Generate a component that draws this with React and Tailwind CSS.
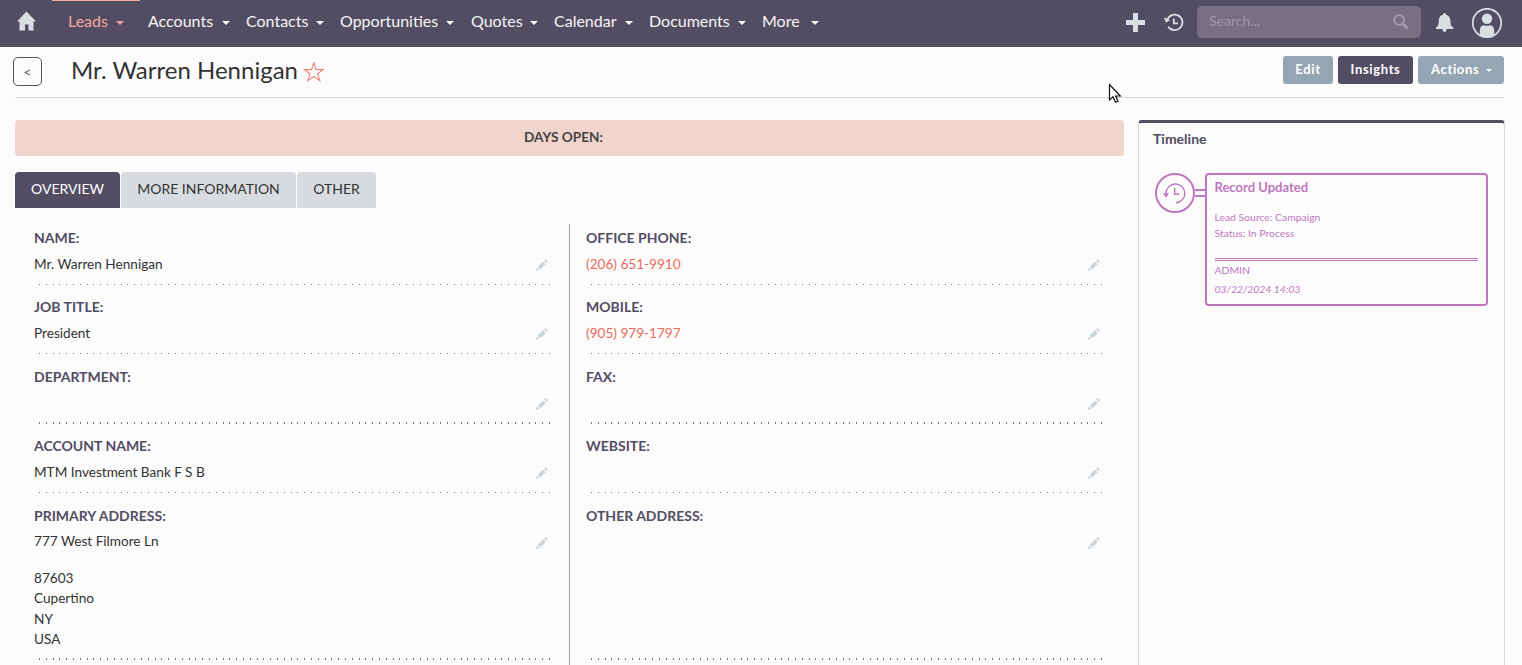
import React from "react";

const navItems = [
  { label: "Leads", box: "w-[80px] pr-[24px]", active: true },
  { label: "Accounts", box: "w-[98px] pr-[16px]" },
  { label: "Contacts", box: "w-[94px] pr-[16px]" },
  { label: "Opportunities", box: "w-[131px] pr-[17px]" },
  { label: "Quotes", box: "w-[83px] pr-[16px]" },
  { label: "Calendar", box: "w-[95px] pr-[16px]" },
  { label: "Documents", box: "w-[113px] pr-[16px]" },
  { label: "More", box: "w-[57px]" },
];

const rows = [
  { h: "h-[69px] pb-[8px]", left: { label: "NAME:", value: "Mr. Warren Hennigan" }, right: { label: "OFFICE PHONE:", value: "(206) 651-9910", link: true } },
  { h: "h-[70px] pb-[9px]", left: { label: "JOB TITLE:", value: "President" }, right: { label: "MOBILE:", value: "(905) 979-1797", link: true } },
  { h: "h-[69px] pb-[8px]", thick: true, left: { label: "DEPARTMENT:" }, right: { label: "FAX:" } },
  { h: "h-[70px] pb-[9px]", left: { label: "ACCOUNT NAME:", value: "MTM Investment Bank F S B" }, right: { label: "WEBSITE:" } },
  {
    h: "h-[166px] pb-[8px]",
    thick: true,
    left: { label: "PRIMARY ADDRESS:", value: "777 West Filmore Ln", extra: ["87603", "Cupertino", "NY", "USA"] },
    right: { label: "OTHER ADDRESS:" },
  },
];

function Caret({ className = "" }) {
  return (
    <svg className={className} width="8" height="4" viewBox="0 0 8 4" fill="currentColor">
      <path d="M0 0H8L4 4Z" />
    </svg>
  );
}

function Pencil() {
  return (
    <svg width="12" height="12" viewBox="0 0 12 12" fill="#c8d2d9">
      <path d="M0 12L1.2 8.3L3.7 10.8Z" />
      <path d="M2 7.6L7.2 2.4L9.8 5L4.6 10.2Z" />
      <path d="M8.1 1.6L9.2 .5Q9.7 0 10.2 .5L11.5 1.8Q12 2.3 11.5 2.8L10.4 3.9Z" />
    </svg>
  );
}

function Field({ field, thick }) {
  return (
    <div className="flex h-full flex-col">
      <div className="h-[28px] pt-[4px] text-[14px] leading-[20px] font-bold text-[#534d64]">{field.label}</div>
      <div className="flex justify-between text-[13.6px] leading-[20px]">
        <span className={(field.extra ? "pt-[1px] " : "pt-[2px] ") + (field.link ? "text-[#ee6a5b]" : "text-[#333]")}>
          {field.value || "\u00a0"}
        </span>
        <span className="h-[27px] pt-[7px]">
          <Pencil />
        </span>
      </div>
      {field.extra && (
        <div className="pt-[11px] text-[13.6px] leading-[20.4px] text-[#333]">
          {field.extra.map((line) => (
            <div key={line}>{line}</div>
          ))}
        </div>
      )}
      <div className="min-h-0 flex-1" />
      <div
        className={
          "ml-[5px] w-[512px] shrink-0 bg-[repeating-linear-gradient(90deg,#777_0_1px,transparent_1px_6.8px)] " +
          (thick ? "h-[2px]" : "h-px")
        }
      />
    </div>
  );
}

function HistoryIcon() {
  return (
    <svg width="20" height="19" viewBox="0 0 20 19" fill="none" stroke="#d8dee2">
      <path d="M3.2 7A7.8 7.8 0 1 1 4.2 13.8" strokeWidth="1.8" />
      <path d="M0 5.2L.9 4.4L2.6 5.8L6.2 6.9L2.1 9.8Z" fill="#d8dee2" stroke="none" />
      <path d="M9.8 5.5V10.3H14" strokeWidth="1.8" />
    </svg>
  );
}

export default function App() {
  return (
    <div className="relative flex h-[665px] w-[1522px] flex-col overflow-hidden bg-[#fcfcfc] font-['Lato',sans-serif]">
      <header className="flex h-[47px] shrink-0 bg-[#534d64]">
        <div className="w-[52px] pt-[11px] pl-[17px]">
          <svg width="20" height="20" viewBox="0 0 20 20" fill="#d8dee2">
            <path d="M9.5 .5L19 10.5H16.5V19.5H11.5V13.5H8V19.5H2.5V10.5H0Z" />
          </svg>
        </div>
        <nav className="flex">
          {navItems.map((item) => (
            <div
              key={item.label}
              className={item.active ? "flex border-t border-[#f5a69c] pl-[16px] text-[#f5a69c] w-[88px] mr-[8px]" : "flex border-t border-transparent text-[#f5f5f5]"}
            >
              <div className={"flex shrink-0 justify-between text-[16px] leading-[40px] " + item.box}>
                <span>{item.label}</span>
                <Caret className="mt-[20px] shrink-0" />
              </div>
            </div>
          ))}
        </nav>
        <div className="flex flex-1 justify-end pr-[20px]">
          <svg className="mt-[13px] mr-[19px]" width="19" height="19" viewBox="0 0 19 19" fill="#d8dee2">
            <path d="M7 0H12V7H19V12H12V19H7V12H0V7H7Z" />
          </svg>
          <div className="mt-[13px] mr-[13px]">
            <HistoryIcon />
          </div>
          <div className="mt-[6px] mr-[15px] flex h-[32px] w-[224px] justify-between rounded-[5px] bg-[#777083] pr-[12px] pl-[12px]">
            <span className="text-[14px] leading-[30px] text-[#9c97a3]">Search...</span>
            <svg className="mt-[8px]" width="16" height="16" viewBox="0 0 16 16" fill="none" stroke="#a19da8">
              <circle cx="6" cy="6" r="4.9" strokeWidth="1.9" />
              <path d="M10 10L14.6 14.6" strokeWidth="2.8" />
            </svg>
          </div>
          <svg className="mt-[13px] mr-[18px]" width="18" height="19" viewBox="0 0 18 19" fill="#d8dee2">
            <path d="M8.5 0C9.5 0 10 .8 10 1.8C13 2.5 14.4 5 14.4 8C14.4 11.5 15 13.3 17.5 14.8V16H-.3V14.8C2.2 13.3 2.8 11.5 2.8 8C2.8 5 4 2.5 7 1.8C7 .8 7.5 0 8.5 0Z" />
            <path d="M6.5 16H10.5Q10.5 19 8.5 19Q6.5 19 6.5 16Z" />
          </svg>
          <svg className="mt-[8px]" width="30" height="30" viewBox="0 0 30 30" fill="#d8dee2">
            <circle cx="15" cy="15" r="14.2" fill="none" stroke="#d8dee2" strokeWidth="1.7" />
            <circle cx="15" cy="10.7" r="5.2" />
            <path d="M7.8 27.3V23.5Q7.8 17.2 12 17.2Q15 18.2 18 17.2Q22.2 17.2 22.2 23.5V27.3Q19 30 15 30Q11 30 7.8 27.3Z" />
          </svg>
        </div>
      </header>

      <div className="mr-[18px] ml-[15px] flex h-[51px] shrink-0 border-b border-[#d9d9d9]">
        <button className="mt-[10px] -ml-[2px] h-[29px] w-[29px] rounded-[5px] border border-[#555] text-[13.6px] leading-[26px] text-[#555]">
          &lt;
        </button>
        <h1 className="ml-[29px] text-[24px] leading-[46px] text-[#333]">Mr. Warren Hennigan</h1>
        <svg className="mt-[15px] ml-[5px]" width="21" height="20" viewBox="0 0 21 20" fill="none" stroke="#f08377">
          <path d="M10.8 .9L13.1 7.6H20.2L14.6 11.8L16.8 18.6L10.8 14.5L4.8 18.6L7 11.8L1.4 7.6H8.5Z" strokeWidth="1.1" />
        </svg>
        <div className="flex flex-1 justify-end gap-[5px] pt-[9px] text-[13px] leading-[26px] font-bold tracking-[0.65px] text-white">
          <button className="h-[28px] w-[50px] rounded-[3px] bg-[#95a5b3] pb-[2px]">Edit</button>
          <button className="h-[28px] w-[75px] rounded-[3px] bg-[#534d64] pb-[2px]">Insights</button>
          <button className="flex h-[28px] w-[86px] items-center rounded-[3px] bg-[#95a5b3] pb-[2px] pl-[13px]">
            <span>Actions</span>
            <svg className="mt-[3px] ml-[7px]" width="6" height="3" viewBox="0 0 6 3" fill="currentColor">
              <path d="M0 0H6L3 3Z" />
            </svg>
          </button>
        </div>
      </div>

      <div className="mt-[22px] flex flex-1 pl-[15px]">
        <main className="w-[1109px]">
          <div className="h-[36px] rounded-[4px] bg-[#f2d4ce] pr-[12px] text-center text-[13.6px] leading-[34px] font-bold text-[#444]">
            DAYS OPEN:
          </div>
          <div className="mt-[16px] flex gap-px text-center text-[14px] leading-[34px] text-[#333]">
            <div className="h-[36px] w-[105px] rounded-t-[4px] bg-[#534d64] text-white">OVERVIEW</div>
            <div className="h-[36px] w-[175px] rounded-t-[4px] bg-[#d8dce0]">MORE INFORMATION</div>
            <div className="h-[36px] w-[79px] rounded-t-[4px] bg-[#d8dce0]">OTHER</div>
          </div>
          <div className="mt-[16px] flex">
            <div className="w-[555px] border-r border-[#95a5b3] pl-[19px]">
              {rows.map((row) => (
                <div key={row.left.label} className={"w-[514px] " + row.h}>
                  <Field field={row.left} thick={row.thick} />
                </div>
              ))}
            </div>
            <div className="pl-[16px]">
              {rows.map((row) => (
                <div key={row.right.label} className={"w-[514px] " + row.h}>
                  <Field field={row.right} thick={row.thick} />
                </div>
              ))}
            </div>
          </div>
        </main>
        <aside className="ml-[14px] w-[367px] rounded-t-[4px] border-x border-t-3 border-x-[#d9d9d9] border-t-[#534d64]">
          <h2 className="mt-[5px] ml-[14px] text-[14px] leading-[22px] font-bold text-[#534d64]">Timeline</h2>
          <div className="mt-[23px] ml-[16px] flex text-[#bf78c0]">
            <div className="flex h-[40px] w-[40px] items-center justify-center rounded-full border-2 border-[#bf78c0]">
              <svg className="mr-px" width="23" height="21" viewBox="0 0 23 21" fill="none" stroke="currentColor" strokeWidth="1.4">
                <path d="M3 10.5A9.4 9.4 0 1 1 12.8 19.8" />
                <path d="M-.2 10.3H6L3 14.7Z" fill="currentColor" stroke="none" />
                <path d="M11.7 5V11.3H16.5" />
              </svg>
            </div>
            <div className="mt-[16px] h-[8px] w-[10px] border-y-2 border-[#bf78c0]" />
            <div className="h-[133px] w-[283px] rounded-[4px] border-2 border-[#bf78c0] pr-[8px] pl-[7.5px]">
              <div className="pt-[2px] text-[13px] leading-[20px] font-bold">Record Updated</div>
              <div className="pt-[12px] text-[10.4px] leading-[16px]">
                <div>Lead Source: Campaign</div>
                <div>Status: In Process</div>
              </div>
              <div className="mt-[17px] h-[3px] border-y border-[#bf78c0]" />
              <div className="text-[10.4px] leading-[18px]">ADMIN</div>
              <div className="text-[10.4px] leading-[20px] italic">03/22/2024 14:03</div>
            </div>
          </div>
        </aside>
      </div>

      <svg className="absolute top-[83px] left-[1108px]" width="14" height="21" viewBox="0 0 14 21" fill="white" stroke="#111" strokeWidth="1.2">
        <path d="M1.5 1.5V17L5 13.8L7.4 19.3L10 18.2L7.6 13H12.3Z" />
      </svg>
    </div>
  );
}
